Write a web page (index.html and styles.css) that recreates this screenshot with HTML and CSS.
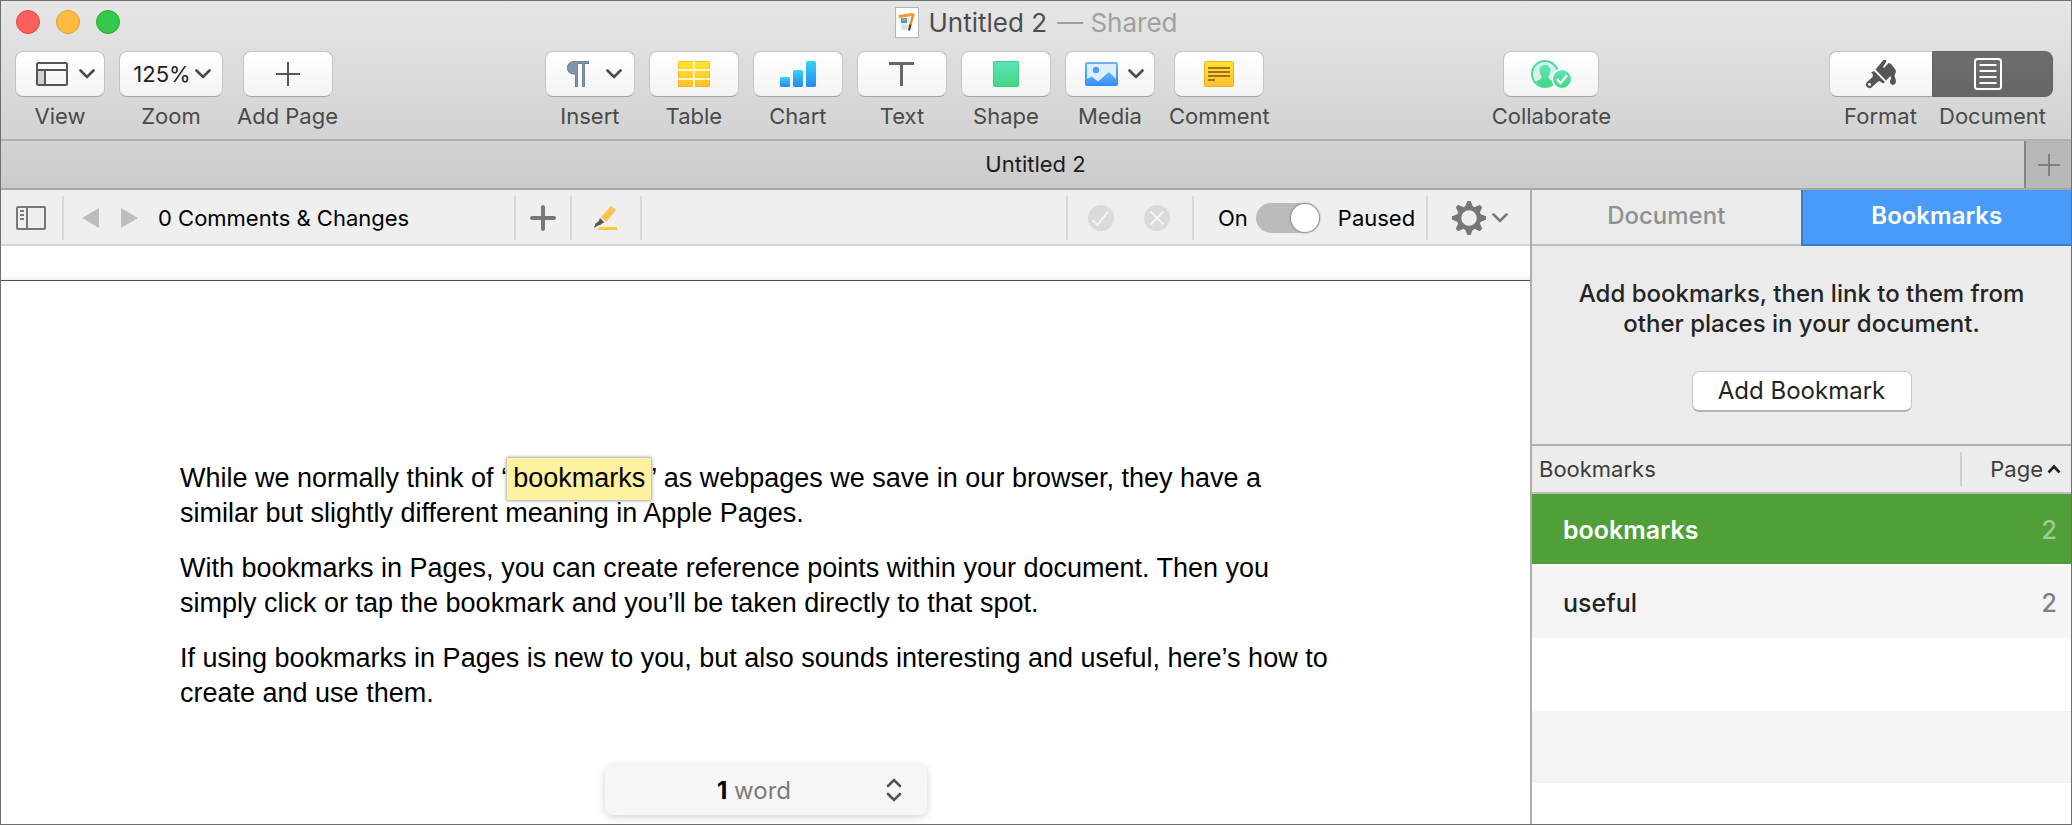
FILE: index.html
```html
<!DOCTYPE html>
<html lang="en">
<head>
<meta charset="utf-8">
<title>Untitled 2</title>
<link rel="stylesheet" href="styles.css">
</head>
<body>
<svg class="defs" width="0" height="0" aria-hidden="true">
  <defs>
    <linearGradient id="yellow" x1="0" y1="0" x2="0" y2="1"><stop offset="0" stop-color="#ffe52e"/><stop offset="1" stop-color="#ffc12b"/></linearGradient>
    <linearGradient id="blue" x1="0" y1="0" x2="0" y2="1"><stop offset="0" stop-color="#34d2fa"/><stop offset="1" stop-color="#2a86ee"/></linearGradient>
    <linearGradient id="green" x1="0" y1="0" x2="0" y2="1"><stop offset="0" stop-color="#5fe3bd"/><stop offset="1" stop-color="#43d97b"/></linearGradient>
    <linearGradient id="sky" x1="0" y1="0" x2="0" y2="1"><stop offset="0" stop-color="#6bb0f8"/><stop offset="1" stop-color="#3390fa"/></linearGradient>
    <symbol id="chev" viewBox="0 0 16 10"><path d="M1.500 1.500 8 8 14.500 1.500" fill="none" stroke="currentColor" stroke-width="2.600" stroke-linecap="round"/></symbol>
  </defs>
</svg>
<div class="window">
  <header class="chrome">
    <div class="titlebar">
      <div class="lights">
        <button class="light red" aria-label="Close"></button>
        <button class="light amber" aria-label="Minimize"></button>
        <button class="light lime" aria-label="Full screen"></button>
      </div>
      <h1 class="title">
        <svg class="title-icon" width="24" height="32" viewBox="0 0 24 32" aria-hidden="true"><rect x=".5" y=".5" width="23" height="30" fill="#fff" stroke="#b5b5b5"/><path d="M4 9 16 7l2 16-12 1z" fill="#eef0f2"/><path d="M3.500 8 17 6v3L4 11z" fill="#f59a2f"/><rect x="6" y="11" width="6" height="5" fill="#3d9bf0"/><circle cx="9" cy="12.500" r="1.500" fill="#f59a2f"/><path d="M7 19h6M7 21h5" stroke="#c9ccd0"/><path d="M18.500 6.500 14.500 21" stroke="#f08c22" stroke-width="2.400"/><path d="m15.500 17.500-1.500 6" stroke="#444" stroke-width="2"/></svg>
        <span>Untitled 2</span><span class="muted">— Shared</span>
      </h1>
    </div>
    <div class="toolbar">
      <div class="group">
        <button class="tool"><span class="face with-chev">
          <svg width="32" height="24" viewBox="0 0 32 24"><rect x="2" y="9" width="7" height="13" fill="#d0d0d0"/><rect x="1" y="1" width="30" height="22" rx="1.500" fill="none" stroke="#555" stroke-width="2"/><path d="M1 8h30M9 8v15" stroke="#555" stroke-width="2"/></svg>
          <svg width="16" height="10"><use href="#chev"/></svg></span><span>View</span></button>
        <button class="tool"><span class="face zoom">125%<svg width="16" height="10"><use href="#chev"/></svg></span><span>Zoom</span></button>
        <button class="tool"><span class="face"><svg width="24" height="24" viewBox="0 0 24 24"><path d="M12 0v24M0 12h24" stroke="#555" stroke-width="2"/></svg></span><span>Add Page</span></button>
      </div>
      <div class="space-a"></div>
      <div class="group">
        <button class="tool"><span class="face with-chev insert">
          <svg width="22" height="26" viewBox="0 0 22 26"><path d="M8.500 0H22v3h-4v23h-3V3h-4v23H8V13.500C3 13.500 0 10.800 0 6.800 0 2.500 3.500 0 8.500 0z" fill="#8095ad"/><path d="M8.500.5h13v2h-4v23h-2v-23h-5v23h-2V13C3.500 13 .5 10.500.5 6.800.5 3 3.500.5 8.500.5z" fill="none" stroke="#6f839b"/></svg>
          <svg width="16" height="10"><use href="#chev"/></svg></span><span>Insert</span></button>
        <button class="tool"><span class="face"><svg width="32" height="26" viewBox="0 0 32 26"><rect width="32" height="26" rx="1.500" fill="url(#yellow)"/><rect x=".5" y=".5" width="31" height="25" rx="1" fill="none" stroke="#efa91f" stroke-opacity=".6"/><path d="M0 9h32M0 18h32M16 0v26" stroke="#fff6c4" stroke-width="2"/></svg></span><span>Table</span></button>
        <button class="tool"><span class="face"><svg width="36" height="26" viewBox="0 0 36 26"><rect y="16" width="10" height="10" rx="1.500" fill="url(#blue)"/><rect x="13" y="9" width="10" height="17" rx="1.500" fill="url(#blue)"/><rect x="26" width="10" height="26" rx="1.500" fill="url(#blue)"/></svg></span><span>Chart</span></button>
        <button class="tool"><span class="face"><svg width="25" height="24" viewBox="0 0 25 24"><path d="M0 1.500h25M12.500 1.500V24" stroke="#666" stroke-width="3"/></svg></span><span>Text</span></button>
        <button class="tool"><span class="face"><svg width="26" height="26" viewBox="0 0 26 26"><rect x=".5" y=".5" width="25" height="25" rx="1" fill="url(#green)" stroke="#3fcb8a"/></svg></span><span>Shape</span></button>
        <button class="tool"><span class="face with-chev media">
          <svg width="33" height="24" viewBox="0 0 33 24"><rect x="1" y="1" width="31" height="22" rx="1" fill="#dcedff" stroke="url(#sky)" stroke-width="2"/><circle cx="11" cy="8" r="3.200" fill="#549df6"/><path d="M1 17.500 6.500 14.500 13 19.500 24 10l8 8v5H1z" fill="url(#sky)"/></svg>
          <svg width="16" height="10"><use href="#chev"/></svg></span><span>Media</span></button>
        <button class="tool"><span class="face"><svg width="30" height="26" viewBox="0 0 30 26"><rect x=".5" y=".5" width="29" height="25" rx="1" fill="url(#yellow)" stroke="#eab02a"/><path d="M4 7h22M4 11h22M4 15h22M4 19h7" stroke="#a2702a" stroke-width="2"/></svg></span><span>Comment</span></button>
      </div>
      <div class="space-b"></div>
      <div class="group">
        <button class="tool"><span class="face wide"><svg width="42" height="30" viewBox="0 0 42 30"><circle cx="15" cy="15" r="13" fill="#d3f3e8" stroke="#52d7a0" stroke-width="2"/><path d="M15 6c3 0 5.500 2 5.500 5 0 3-1 4.500-2 6 0 3 1.500 3.500 5.500 5.500-2 3-5 5-9 5s-7-2-9-5c4-2 5.500-2.500 5.500-5.500-1-1.500-2-3-2-6 0-3 2.500-5 5.500-5z" fill="url(#green)"/><circle cx="32" cy="20" r="10.500" fill="#fbfbfb"/><circle cx="32" cy="20" r="9" fill="url(#green)"/><path d="m27 20 3.500 4 6.500-7.500" fill="none" stroke="#fff" stroke-width="2.200"/></svg></span><span>Collaborate</span></button>
      </div>
      <div class="space-c"></div>
      <div class="segments">
        <button class="tool"><span class="face seg-left"><svg width="30" height="30" viewBox="0 0 30 30"><path d="M17 1.500q2-1.500 3.500.5l-3.500 6 1 1 4.500-5q1.500 0 2.500 1l4 5q1.500 2 .5 4l-1 3q1.500 3.500 1.500 6-1 3-3 3t-3-2.500q0-2.500 1-4l-.5-2.500-4.500 4.500L9.500 10.500z" fill="#555"/><path d="m8 12 11 11-2 1.500-3.500-2.500-2 1-6 5.500q-2.500 1.500-4.500-.5t-.5-4.500l6-5.500.500-2.500-2-2z" fill="#555"/><circle cx="3.500" cy="25.500" r="1.400" fill="#fff"/></svg></span><span>Format</span></button>
        <button class="tool"><span class="face seg-right"><svg width="28" height="32" viewBox="0 0 28 32"><rect x="1" y="1" width="26" height="30" rx="2.500" fill="none" stroke="#fff" stroke-width="2"/><path d="M5.500 7h17M5.500 13h17M5.500 19h17M5.500 25h17" stroke="#fff" stroke-width="2"/></svg></span><span>Document</span></button>
      </div>
    </div>
    <div class="tabs">
      <div class="tab">Untitled 2</div>
      <button class="new-tab" aria-label="New tab"><svg width="22" height="22" viewBox="0 0 22 22"><path d="M11 0v22M0 11h22" stroke="#808080" stroke-width="2"/></svg></button>
    </div>
  </header>
  <div class="body">
    <main class="editor">
      <div class="review">
        <button class="cell pane" aria-label="Sidebar"><svg width="30" height="24" viewBox="0 0 30 24"><rect x="1" y="1" width="28" height="22" rx="1" fill="none" stroke="#777" stroke-width="2"/><path d="M11 1v22M4 5h4M4 9h4M4 13h4" stroke="#777" stroke-width="2"/></svg></button>
        <div class="cell nav">
          <button aria-label="Previous"><svg width="17" height="20" viewBox="0 0 17 20"><path d="M17 0v20L0 10z" fill="#bdbdbd"/></svg></button>
          <button aria-label="Next"><svg width="17" height="20" viewBox="0 0 17 20"><path d="M0 0v20l17-10z" fill="#bdbdbd"/></svg></button>
          <span>0 Comments &amp; Changes</span>
        </div>
        <button class="cell add" aria-label="Add comment"><svg width="26" height="26" viewBox="0 0 26 26"><path d="M13 2v22M2 13h22" stroke="#777" stroke-width="4" stroke-linecap="round"/></svg></button>
        <button class="cell marker" aria-label="Highlight"><svg width="24" height="24" viewBox="0 0 24 24"><path d="m17 0 5 4-9.500 12L7 11z" fill="#fcc44f"/><path d="m6 12 4.500 4.500-2 .5-1.500 1.500-3 1L0 22l1.500-4.500 3-2z" fill="#555"/><path d="m5 22 1-1h17v3H3z" fill="#ffcb3a"/></svg></button>
        <div class="fill"></div>
        <div class="cell decide">
          <button aria-label="Accept"><svg width="26" height="26" viewBox="0 0 26 26"><circle cx="13" cy="13" r="13" fill="#dadada"/><path d="m4.500 15 5 5L20 6.500" fill="none" stroke="#f5f5f5" stroke-width="2"/></svg></button>
          <button aria-label="Reject"><svg width="26" height="26" viewBox="0 0 26 26"><circle cx="13" cy="13" r="13" fill="#dadada"/><path d="m6.500 6.500 13 13m0-13-13 13" stroke="#f5f5f5" stroke-width="2"/></svg></button>
        </div>
        <label class="cell track">On<input type="checkbox" class="switch" checked><span>Paused</span></label>
        <button class="cell gear" aria-label="Options"><svg width="34" height="34" viewBox="-17 -17 34 34"><g fill="#777"><path id="t" d="M-4-11-1.700-17H1.700L4-11z"/><use href="#t" transform="rotate(45)"/><use href="#t" transform="rotate(90)"/><use href="#t" transform="rotate(135)"/><use href="#t" transform="rotate(180)"/><use href="#t" transform="rotate(225)"/><use href="#t" transform="rotate(270)"/><use href="#t" transform="rotate(315)"/></g><circle r="10" fill="none" stroke="#777" stroke-width="4.500"/></svg><svg width="16" height="10"><use href="#chev"/></svg></button>
      </div>
      <div class="page-gap"></div>
      <article class="page">
        <p>While we normally think of ‘<mark>bookmarks</mark>’ as webpages we save in our browser, they have a similar but slightly different meaning in Apple Pages.</p>
        <p>With bookmarks in Pages, you can create reference points within your document. Then you simply click or tap the bookmark and you’ll be taken directly to that spot.</p>
        <p>If using bookmarks in Pages is new to you, but also sounds interesting and useful, here’s how to create and use them.</p>
      </article>
      <button class="count"><span class="count-text"><b>1</b> word</span><svg width="16" height="24" viewBox="0 0 16 24"><path d="m2 8 6-6 6 6M2 16l6 6 6-6" fill="none" stroke="#555" stroke-width="2.600" stroke-linecap="round"/></svg></button>
    </main>
    <aside class="side">
      <div class="side-tabs">
        <button>Document</button>
        <button class="on">Bookmarks</button>
      </div>
      <section class="intro">
        <p>Add bookmarks, then link to them from other places in your document.</p>
        <button>Add Bookmark</button>
      </section>
      <table class="list">
        <thead><tr><th>Bookmarks</th><th class="num"><span class="page-head">Page<svg width="14" height="10" viewBox="0 0 14 10"><path d="M1.500 8.500 7 2.500l5.500 6" fill="none" stroke="#222" stroke-width="2.600"/></svg></span></th></tr></thead>
        <tbody>
          <tr class="sel"><td>bookmarks</td><td class="num">2</td></tr>
          <tr><td>useful</td><td class="num">2</td></tr>
        </tbody>
      </table>
      <div class="blank"></div>
    </aside>
  </div>
</div>
</body>
</html>
```
FILE: styles.css
```css
* { box-sizing: border-box; }
body { margin: 0; font-family: Inter, "Liberation Sans", sans-serif; font-size: 22px; color: #000; }
button { margin: 0; padding: 0; border: 0; background: none; font: inherit; color: inherit; }
svg { display: block; flex: none; }
.defs { position: absolute; }
.window { display: flex; flex-direction: column; min-height: 100vh; border: 1px solid #6f6f6f; background: #fff; }

.chrome { background: linear-gradient(#e6e6e6, #cbcbcb); border-bottom: 2px solid #a6a6a6; }
.titlebar { position: relative; display: flex; justify-content: center; height: 43px; }
.lights { position: absolute; left: 15px; top: 9px; display: flex; gap: 16px; }
.light { width: 24px; height: 24px; border-radius: 50%; border: 1px solid; }
.red { background: #fc605c; border-color: #e2463f; }
.amber { background: #fdbc40; border-color: #df9e35; }
.lime { background: #34c84a; border-color: #27aa35; }
.title { display: flex; align-items: center; gap: 10px; height: 43px; margin: 0; font-size: 26px; font-weight: 400; color: #4d4d4d; }
.title .muted { color: #a0a0a0; }

.toolbar { display: flex; height: 95px; padding: 7px 18px 0 14px; color: #4a4a4a; }
.group { display: flex; gap: 14px; }
.space-a { flex: 206; }
.space-b { flex: 221; }
.space-c { flex: 217; }
.tool { display: flex; flex-direction: column; align-items: center; gap: 6px; line-height: 26px; }
.face { display: flex; align-items: center; justify-content: center; width: 90px; height: 46px; border: 1px solid #c4c4c4; border-bottom-color: #a5a5a5; border-radius: 8px; background: linear-gradient(#fff, #f3f3f3); }
.with-chev { gap: 11px; padding-left: 10px; }
.insert { gap: 17px; }
.media { gap: 10px; }
.zoom { width: 104px; gap: 4px; padding-left: 2px; color: #222; }
.zoom svg { color: #4a4a4a; }
.wide { width: 96px; }
.segments { display: flex; }
.seg-left { width: 103px; border-right: 0; border-radius: 8px 0 0 8px; }
.seg-right { width: 121px; padding-right: 8px; border-color: #636363; background: linear-gradient(#6d6d6d, #666); border-radius: 0 8px 8px 0; }

.tabs { display: flex; height: 49px; border-top: 2px solid #b0b0b0; }
.tab { flex: 1; display: flex; align-items: center; justify-content: center; padding: 0 0 2px 46px; color: #1c1c1c; }
.new-tab { width: 47px; display: flex; align-items: center; justify-content: center; border-left: 2px solid #858585; background: #b8b8b8; }

.body { flex: 1; display: flex; }
.editor { position: relative; flex: 1; min-width: 0; }
.review { display: flex; height: 56px; padding: 6px 0 4px; border-bottom: 2px solid #d8d8d8; background: #efefef; }
.cell { display: flex; align-items: center; border-left: 2px solid #d8d8d8; }
.pane { padding: 0 16px 0 15px; border-left: 0; }
.nav { gap: 22px; width: 452px; padding-left: 18px; }
.nav span { margin-left: -2px; }
.add { justify-content: center; width: 56px; }
.marker { justify-content: center; width: 70px; }
.fill { flex: 1; border-left: 2px solid #d8d8d8; }
.decide { gap: 30px; width: 126px; padding-left: 20px; }
.track { width: 234px; padding-left: 24px; gap: 8px; }
.track span { margin-left: 10px; }
.switch { appearance: none; display: flex; flex: none; justify-content: flex-end; width: 64px; height: 30px; margin: 0; padding: 1px; border-radius: 15px; background: #bbb; }
.switch::before { content: ""; width: 28px; height: 28px; border-radius: 50%; background: #fff; box-shadow: 0 0 2px 1px #8a8a8a; }
.gear { width: 104px; padding-left: 24px; gap: 6px; color: #777; }

.page-gap { height: 35px; border-bottom: 1px solid #4c4c4c; background: linear-gradient(#fff 85%, #f2f2f2); }
.page { padding: 180px 185px 60px 179px; font-family: "Liberation Sans", Arial, sans-serif; font-size: 27px; line-height: 35px; }
.page p { margin: 0 0 20px; }
.page mark { padding: 5px 6px 7px; background: #fef1a0; color: #000; box-shadow: 0 0 3px 1px rgba(0, 0, 0, .35); }
.count { position: absolute; left: 50%; bottom: 9px; transform: translateX(-50%); display: flex; align-items: center; width: 322px; height: 50px; padding: 0 25px 0 18px; border-radius: 8px; background: #f6f6f6; box-shadow: 0 2px 8px rgba(0, 0, 0, .18); color: #7b7b7b; font-size: 24px; }
.count-text { flex: 1; text-align: center; }
.count b { color: #000; }

.side { display: flex; flex-direction: column; width: 541px; border-left: 2px solid #adadad; background: #ebebeb; }
.side-tabs { display: flex; height: 56px; font-size: 24px; }
.side-tabs button { flex: 1; padding-bottom: 4px; border-bottom: 2px solid #b9bec2; color: #8d9194; font-weight: 500; }
.side-tabs .on { border-bottom-color: #3a7bc9; border-left: 2px solid #3a7bc9; background: #489bf8; color: #fff; font-weight: 600; }
.intro { display: flex; flex-direction: column; align-items: center; gap: 32px; height: 200px; padding: 33px 38px 0; border-bottom: 2px solid #b0b0b0; text-align: center; font-size: 24px; line-height: 30px; color: #242424; }
.intro p { margin: 0; font-weight: 500; }
.intro button { width: 220px; height: 41px; border: 1px solid #c6c6c6; border-bottom: 2px solid #b4b4b4; border-radius: 7px; background: #fff; }
.list { width: 100%; border-collapse: collapse; table-layout: fixed; }
.list th, .list td { padding: 0; text-align: left; }
.list th { height: 47px; padding-left: 7px; background: #ececec; color: #3c3c3c; font-weight: 400; }
.list thead tr { border-bottom: 2px solid #bcbcbc; }
.list .num { width: 118px; padding-right: 14px; text-align: right; }
.list th.num { padding-right: 10px; }
.page-head { display: flex; align-items: center; justify-content: flex-end; gap: 4px; height: 34px; border-left: 2px solid #cfcfcf; }
.list td { height: 73px; padding: 2px 0 0 31px; background: #f4f4f4; color: #242424; font-size: 25px; font-weight: 500; }
.list td.num { color: #7e7e7e; }
.list .sel td { height: 72px; border-bottom: 2px solid #fff; background: #519f38; color: #fff; font-weight: 600; background-clip: padding-box; }
.list .sel td.num { color: #a2cc96; font-weight: 500; }
.blank { flex: 1; background: repeating-linear-gradient(#fff 0 73px, #f4f4f4 73px 145px); }
```
